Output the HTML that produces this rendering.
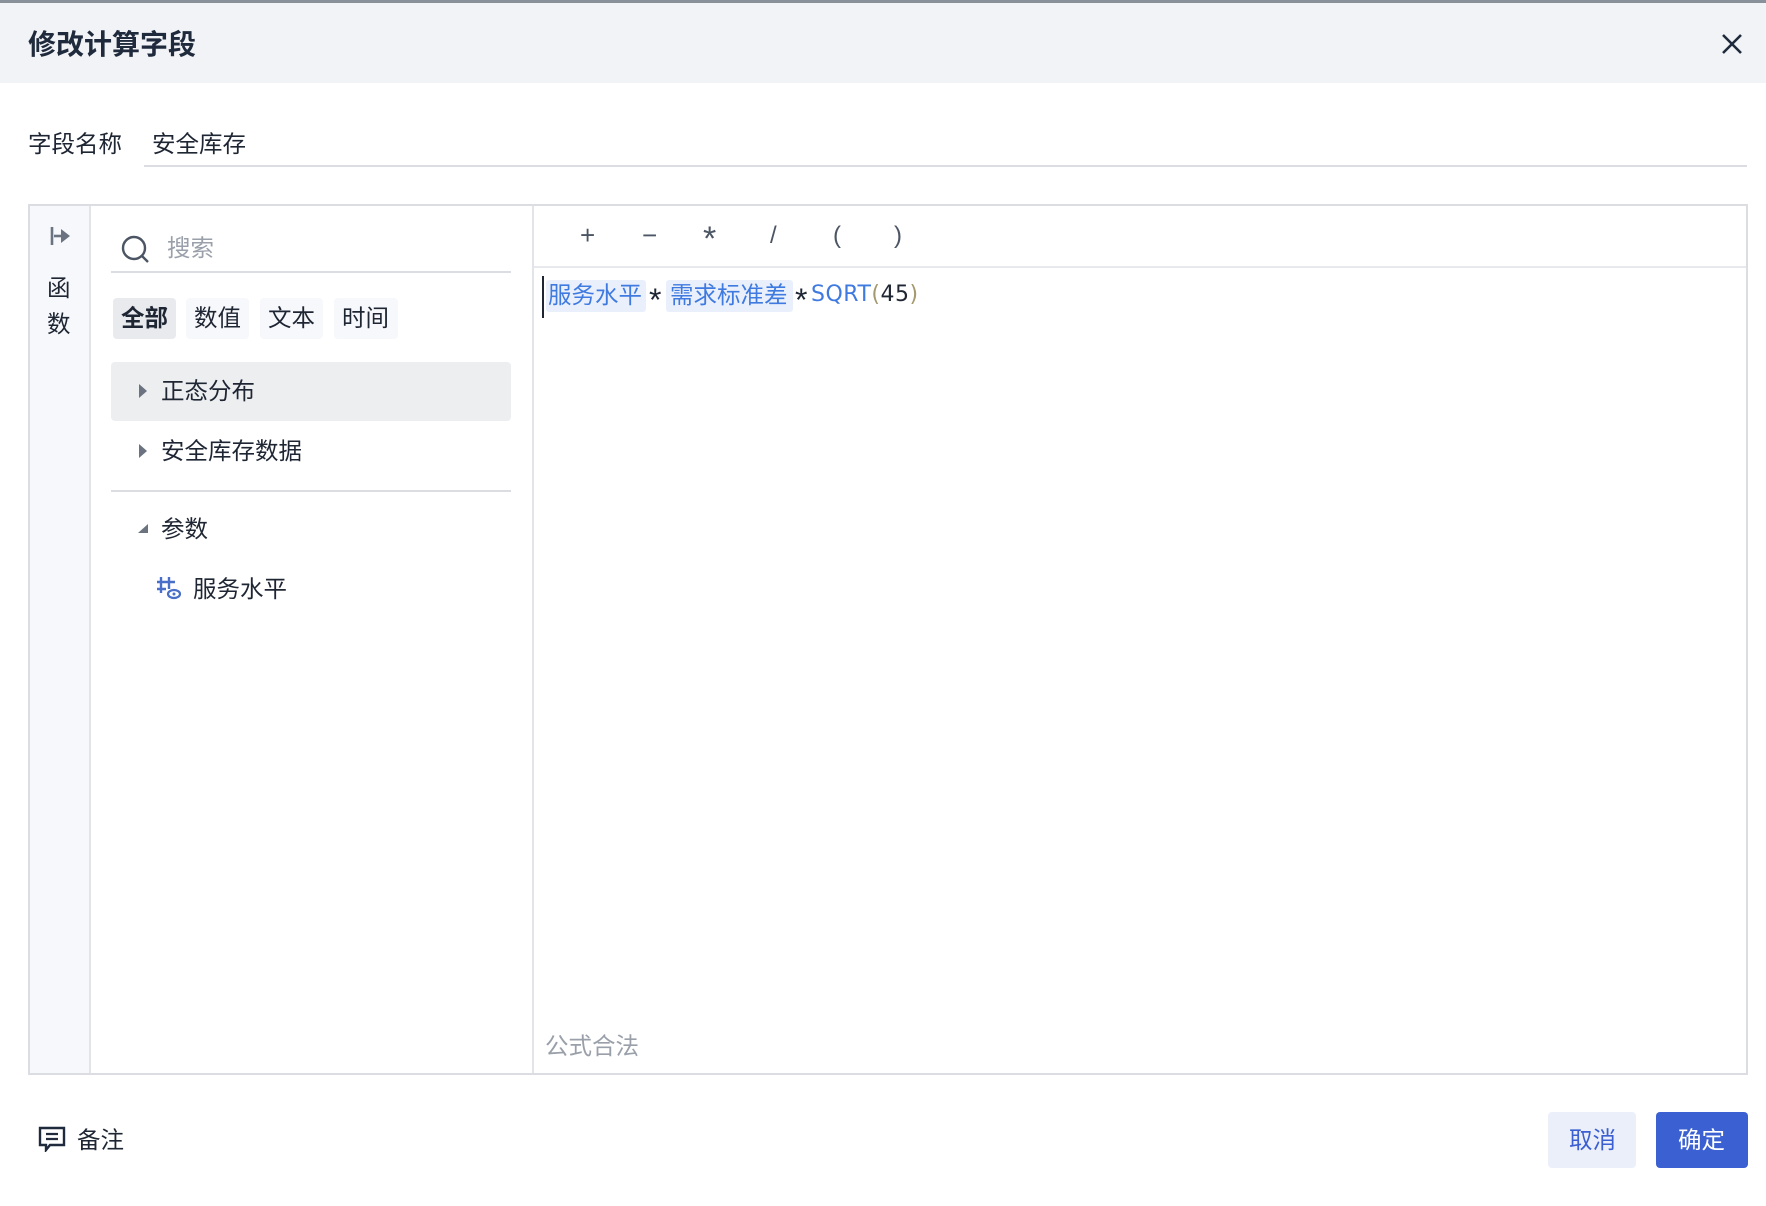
<!DOCTYPE html>
<html><head><meta charset="utf-8"><style>
*{margin:0;padding:0;box-sizing:border-box}
body{width:1766px;height:1206px;background:#fff;font-family:"Liberation Sans","Noto Sans CJK SC",sans-serif;color:#1f2633;position:relative;overflow:hidden}
.a{position:absolute;white-space:nowrap}
.t{font-size:23.5px;line-height:1}
</style></head><body>
<div class="a" style="left:0;top:0;width:1766px;height:83px;background:#f2f3f6;border-top:3px solid #8a9099"></div>
<div class="a" style="left:28px;top:31px;font-size:28px;font-weight:bold;color:#1f2a3c;line-height:1">修改计算字段</div>
<svg class="a" style="left:1721px;top:33px" width="22" height="22" viewBox="0 0 22 22"><path d="M2 2L20 20M20 2L2 20" stroke="#1f2a3c" stroke-width="2.6"/></svg>

<div class="a t" style="left:28px;top:133px">字段名称</div>
<div class="a t" style="left:152px;top:133px">安全库存</div>
<div class="a" style="left:144px;top:165px;width:1603px;height:2px;background:#dcdde2"></div>

<div class="a" style="left:28px;top:204px;width:1720px;height:871px;border:2px solid #dcdde2"></div>
<div class="a" style="left:30px;top:206px;width:61px;height:867px;background:#f7f8fc;border-right:2px solid #e3e4e8"></div>
<svg class="a" style="left:50px;top:225px" width="22" height="22" viewBox="0 0 22 22"><path d="M2 2V20" stroke="#6b7280" stroke-width="2.6"/><path d="M4 11H12" stroke="#6b7280" stroke-width="2.6"/><path d="M11 4L20 11L11 18Z" fill="#6b7280"/></svg>
<div class="a t" style="left:47px;top:270px;line-height:36px;white-space:normal;width:24px">函<br>数</div>
<div class="a" style="left:532px;top:206px;width:2px;height:867px;background:#e3e4e8"></div>

<svg class="a" style="left:121px;top:235px" width="30" height="30" viewBox="0 0 30 30"><circle cx="13" cy="13" r="11" fill="none" stroke="#4b5563" stroke-width="2.4"/><path d="M21 21L27 27" stroke="#4b5563" stroke-width="2.4"/></svg>
<div class="a t" style="left:167px;top:237px;color:#9aa0aa">搜索</div>
<div class="a" style="left:111px;top:271px;width:400px;height:2px;background:#dcdde2"></div>

<div class="a" style="left:113px;top:298px;width:63px;height:41px;background:#e9eaee;border-radius:4px"></div>
<div class="a" style="left:186px;top:298px;width:63px;height:41px;background:#f7f8fb;border-radius:4px"></div>
<div class="a" style="left:260px;top:298px;width:63px;height:41px;background:#f7f8fb;border-radius:4px"></div>
<div class="a" style="left:334px;top:298px;width:64px;height:41px;background:#f7f8fb;border-radius:4px"></div>
<div class="a t" style="left:121px;top:307px;font-weight:bold">全部</div>
<div class="a t" style="left:194px;top:307px">数值</div>
<div class="a t" style="left:268px;top:307px">文本</div>
<div class="a t" style="left:342px;top:307px">时间</div>

<div class="a" style="left:111px;top:362px;width:400px;height:59px;background:#edeef0;border-radius:4px"></div>
<svg class="a" style="left:138px;top:383px" width="10" height="16"><path d="M1 1L9 8L1 15Z" fill="#6b7280"/></svg>
<div class="a t" style="left:161px;top:380px">正态分布</div>
<svg class="a" style="left:138px;top:443px" width="10" height="16"><path d="M1 1L9 8L1 15Z" fill="#6b7280"/></svg>
<div class="a t" style="left:161px;top:440px">安全库存数据</div>
<div class="a" style="left:111px;top:490px;width:400px;height:2px;background:#dcdde2"></div>
<svg class="a" style="left:137px;top:523px" width="12" height="12"><path d="M11 1V10H1Z" fill="#6b7280"/></svg>
<div class="a t" style="left:161px;top:518px">参数</div>
<svg class="a" style="left:156px;top:575px" width="26" height="26" viewBox="0 0 26 26"><path d="M5 2V18M13 2V14M1 7H19M1 14H10" stroke="#4a6fc8" stroke-width="2.4"/><ellipse cx="18" cy="19" rx="6" ry="4" fill="none" stroke="#4a6fc8" stroke-width="2.2"/><circle cx="18" cy="19" r="1.5" fill="#4a6fc8"/></svg>
<div class="a t" style="left:193px;top:578px">服务水平</div>

<div class="a" style="left:534px;top:266px;width:1212px;height:2px;background:#e8e9ec"></div>
<div class="a" style="left:580px;top:222px;font-size:26px;color:#4b5563;line-height:1">+</div>
<div class="a" style="left:642px;top:222px;font-size:26px;color:#4b5563;line-height:1">−</div>
<div class="a" style="left:703px;top:222px;font-size:34px;color:#4b5563;line-height:1">*</div>
<div class="a" style="left:770px;top:224px;font-size:24px;color:#4b5563;line-height:1">/</div>
<div class="a" style="left:833px;top:224px;font-size:24px;color:#4b5563;line-height:1">(</div>
<div class="a" style="left:894px;top:224px;font-size:24px;color:#4b5563;line-height:1">)</div>

<div class="a" style="left:542px;top:276px;width:2px;height:42px;background:#1f2633"></div>
<div class="a" style="left:546px;top:280px;width:100px;height:32px;background:#eaf0fb;border-radius:3px"></div>
<div class="a" style="left:666px;top:280px;width:127px;height:32px;background:#eaf0fb;border-radius:3px"></div>
<div class="a t" style="left:548px;top:284px;color:#3f7ae0">服务水平</div>
<div class="a" style="left:649px;top:284px;font-size:32px;line-height:1">*</div>
<div class="a t" style="left:670px;top:284px;color:#3f7ae0">需求标准差</div>
<div class="a" style="left:795px;top:284px;font-size:32px;line-height:1">*</div>
<div class="a t" style="left:811px;top:284px;color:#3f7ae0;font-family:'DejaVu Sans',sans-serif;font-size:22px;letter-spacing:0.5px">SQRT<span style="color:#a39a70">(</span><span style="color:#1f2633">45</span><span style="color:#a39a70">)</span></div>

<div class="a t" style="left:545px;top:1035px;color:#9aa0aa">公式合法</div>

<svg class="a" style="left:38px;top:1126px" width="28" height="26" viewBox="0 0 28 26"><path d="M2 2H26V19H12L8 24V19H2Z" fill="none" stroke="#1f2a3c" stroke-width="2.4"/><path d="M8 8H20M8 13H20" stroke="#1f2a3c" stroke-width="2.2"/></svg>
<div class="a t" style="left:77px;top:1129px">备注</div>

<div class="a" style="left:1548px;top:1112px;width:88px;height:56px;background:#ebeffa;border-radius:4px"></div>
<div class="a t" style="left:1569px;top:1129px;color:#3b5fd0">取消</div>
<div class="a" style="left:1656px;top:1112px;width:92px;height:56px;background:#3b60d1;border-radius:4px"></div>
<div class="a t" style="left:1678px;top:1129px;color:#fff">确定</div>
</body></html>
